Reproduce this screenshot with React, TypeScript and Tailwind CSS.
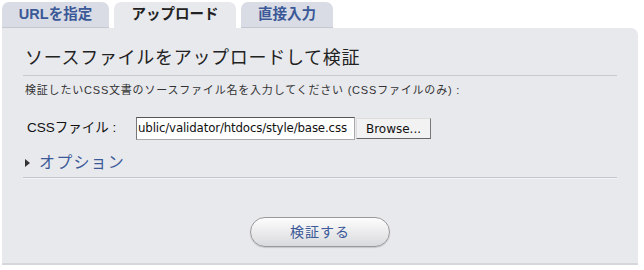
import React from "react";

const tabs = [
  { label: "URLを指定", active: false, w: 107 },
  { label: "アップロード", active: true, w: 122 },
  { label: "直接入力", active: false, w: 92 },
];

export default function App() {
  return (
    <div
      className="h-[270px] w-[644px] overflow-hidden bg-white"
      style={{ fontFamily: '"Lucida Grande", "Liberation Sans", "Noto Sans CJK JP", sans-serif' }}
    >
      <div className="flex h-[28px] items-end gap-[5px] pl-[2px] pt-[2px]">
        {tabs.map((t) => (
          <div
            key={t.label}
            className={
              t.active
                ? "flex h-[26px] items-center justify-center whitespace-nowrap rounded-t-[7px] bg-[#e8e9ed] text-[14.5px] font-bold text-[#222]"
                : "flex h-[26px] items-center justify-center whitespace-nowrap rounded-t-[7px] border-b border-[#c4c8d2] bg-[#d9dce4] text-[14.5px] font-bold text-[#3b5998]"
            }
            style={{ width: t.w }}
          >
            {t.label}
          </div>
        ))}
      </div>

      <div className="mx-[2px] h-[237px] w-[636px] rounded-tr-[7px] border-b-2 border-[#d6d7db] bg-[#e8e9ed] px-[21px] pt-[19px]">
        <h2 className="pl-[2px] text-[18px] leading-[22px] tracking-[0.7px] text-[#222]">
          ソースファイルをアップロードして検証
        </h2>
        <div className="mt-[6px] border-t border-[#c9cad0]" />
        <p className="mt-[7px] pl-[2px] text-[11px] leading-[14px] tracking-[0.8px] text-[#333]">
          検証したいCSS文書のソースファイル名を入力してください (CSSファイルのみ) :
        </p>

        <div className="mt-[20px] flex items-center pl-[4px]">
          <span className="w-[109px] whitespace-nowrap text-[13.5px] text-[#111]">CSSファイル :</span>
          <div className="flex h-[23px] w-[219px] items-center overflow-hidden border border-[#aaa] border-t-[#555] border-l-[#777] bg-white pl-[1px]">
            <span
              className="whitespace-nowrap text-[11.8px] tracking-[-0.15px] text-[#111]"
              style={{ fontFamily: '"DejaVu Sans", sans-serif' }}
            >
              ublic/validator/htdocs/style/base.css
            </span>
          </div>
          <div
            className="ml-[1px] flex h-[21px] w-[75px] items-center justify-center border border-[#ddd] border-b-[#666] border-r-[#777] bg-[#f2f2f2] text-[12px] text-[#111]"
            style={{ fontFamily: '"DejaVu Sans", sans-serif' }}
          >
            Browse...
          </div>
        </div>

        <div className="mt-[11px] flex items-center pl-[1px]">
          <svg width="8" height="10" viewBox="0 0 8 10" className="mr-[7px]">
            <path d="M1 1 L6 5 L1 9 Z" fill="#333" />
          </svg>
          <span className="text-[16px] leading-[24px] tracking-[1.2px] text-[#3b5998]">オプション</span>
        </div>
        <div className="mt-[2px] border-t border-[#c4c6cf] border-b border-b-[#f4f4f6]" />

        <div className="mt-[38px] flex justify-center">
          <div className="flex h-[30px] w-[140px] items-center justify-center rounded-full border border-[#999] bg-gradient-to-b from-[#fdfdfd] to-[#d9dadd] text-[14px] tracking-[1px] text-[#3b5998] shadow-[0_1px_1px_rgba(0,0,0,0.15)]">
            検証する
          </div>
        </div>
      </div>
    </div>
  );
}
